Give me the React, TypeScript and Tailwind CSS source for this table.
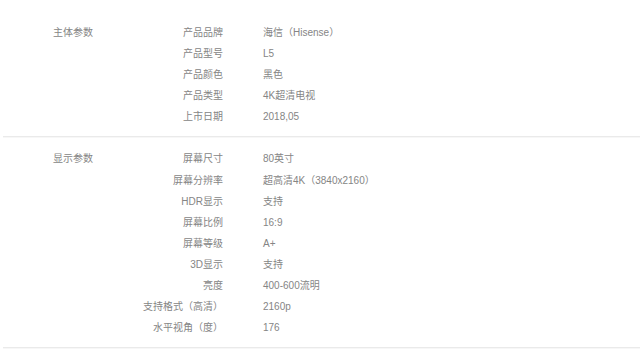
type Section = {
  title: string;
  rows: [string, string][];
};

const sections: Section[] = [
  {
    title: "主体参数",
    rows: [
      ["产品品牌", "海信（Hisense）"],
      ["产品型号", "L5"],
      ["产品颜色", "黑色"],
      ["产品类型", "4K超清电视"],
      ["上市日期", "2018,05"],
    ],
  },
  {
    title: "显示参数",
    rows: [
      ["屏幕尺寸", "80英寸"],
      ["屏幕分辨率", "超高清4K（3840x2160）"],
      ["HDR显示", "支持"],
      ["屏幕比例", "16:9"],
      ["屏幕等级", "A+"],
      ["3D显示", "支持"],
      ["亮度", "400-600流明"],
      ["支持格式（高清）", "2160p"],
      ["水平视角（度）", "176"],
    ],
  },
];

export default function App() {
  return (
    <div
      className="w-[640px] h-[349px] bg-white overflow-hidden pt-[11px] text-[10px] text-[#858585]"
      style={{ fontFamily: '"Liberation Sans", "Noto Sans CJK SC", sans-serif' }}
    >
      {sections.map((section, i) => (
        <div key={i} className="ml-[3px] border-b border-[#eaeaea] shadow-[0_1px_0_#f7f7f7] pt-[11px] pb-[9px]">
          <div className="flex">
            <div className="w-[117px] pl-[50px] leading-[21px] h-[21px]">{section.title}</div>
            <div className="flex flex-col">
              {section.rows.map(([label, value], j) => (
                <div key={j} className="flex h-[21.1px] leading-[21px]">
                  <div className="w-[103px] text-right whitespace-nowrap">{label}</div>
                  <div className="pl-[40px] whitespace-nowrap">{value}</div>
                </div>
              ))}
            </div>
          </div>
        </div>
      ))}
    </div>
  );
}
